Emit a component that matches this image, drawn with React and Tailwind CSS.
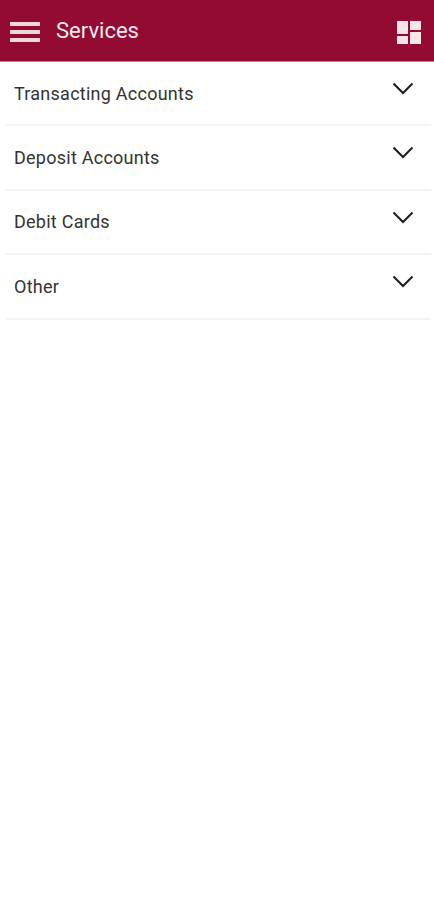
// Services screen
import React from 'react';

const rows = ['Transacting Accounts', 'Deposit Accounts', 'Debit Cards', 'Other'];

const App = () => {
  return (
    <div className="min-h-[900px] bg-white font-['Roboto',sans-serif]">
      {/* Header */}
      <div className="flex h-[62px] items-center justify-between border-b border-[#c9768d] bg-[#930a33] pl-[10px] pr-[13px]">
        <div className="flex items-center gap-[16px]">
          <div className="mt-[3px] flex w-[30px] flex-col gap-[4px]">
            <div className="h-[4px] bg-[#f3d5dd]" />
            <div className="h-[4px] bg-[#f3d5dd]" />
            <div className="h-[4px] bg-[#f3d5dd]" />
          </div>
          <span className="mt-[1px] text-[22px] leading-none text-[#fbeaee]">Services</span>
        </div>
        <svg className="mt-[4px]" width="24" height="23" viewBox="0 0 24 23" fill="#f8e4e9">
          <rect x="0" y="0" width="11" height="13" />
          <rect x="0" y="15" width="11" height="8" />
          <rect x="13" y="0" width="11" height="9" />
          <rect x="13" y="11" width="11" height="12" />
        </svg>
      </div>

      {/* Rows */}
      <div className="pl-[5px] pr-[3px]">
        {rows.map((row) => (
          <div key={row} className="flex h-[64.4px] items-start justify-between border-b-2 border-[#f3f3f3] pl-[9px] pr-[17px]">
            <span className="mt-[19.5px] text-[18px] leading-[24px] tracking-[0.25px] text-[#333333]">{row}</span>
            <svg className="mt-[20px]" width="22" height="13" viewBox="0 0 22 13" fill="none" stroke="#1c1c1c" strokeWidth="2">
              <path d="M1.5 1.5 L11 11 L20.5 1.5" />
            </svg>
          </div>
        ))}
      </div>
    </div>
  );
};

export default App;
